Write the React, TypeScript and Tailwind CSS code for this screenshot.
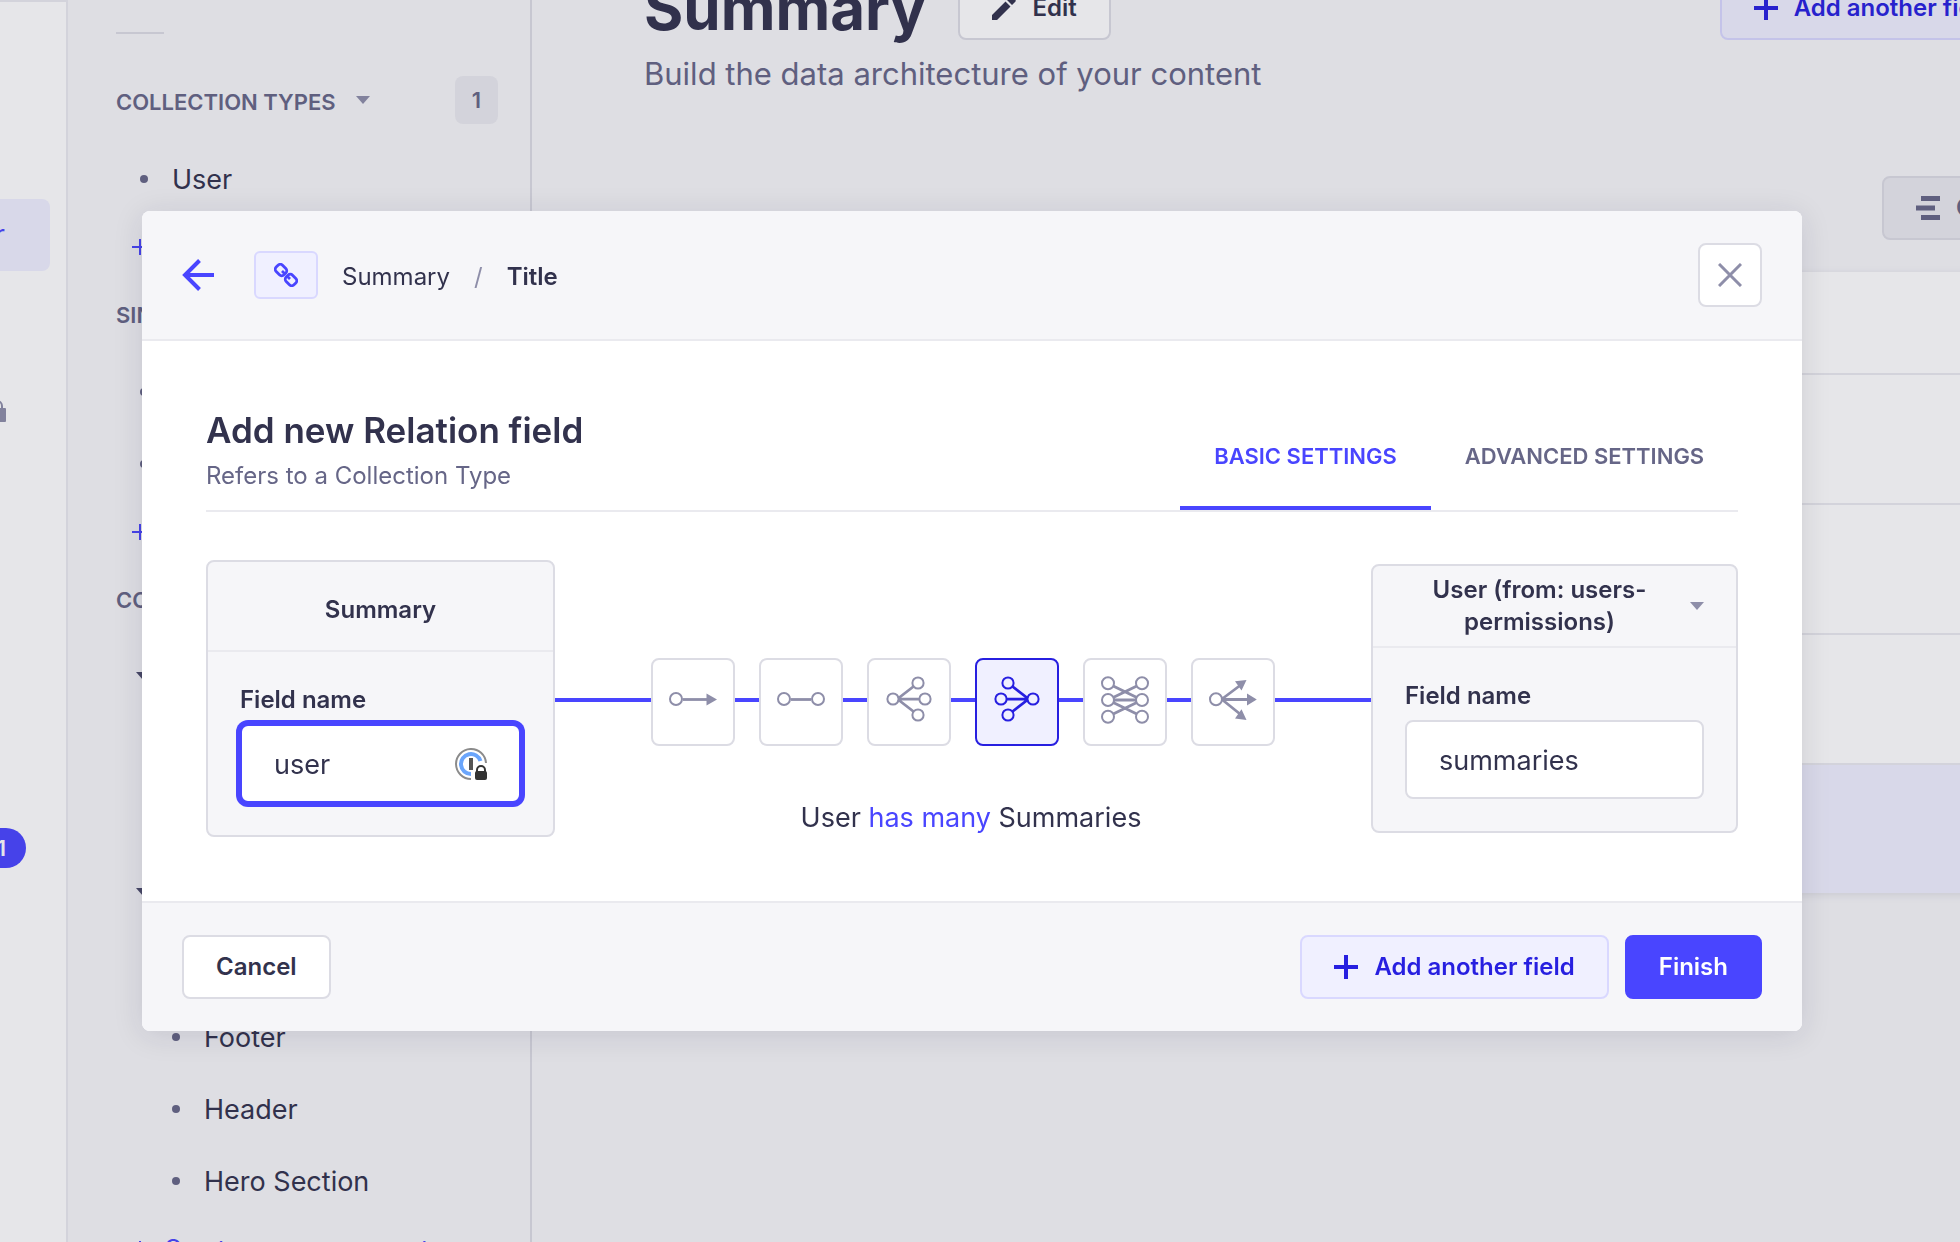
import { useId, useState } from "react";
import type { ReactNode } from "react";

function PlusIcon({ className }: { className: string }) {
  return (
    <svg viewBox="0 0 24 24" className={className} fill="none" stroke="currentColor" strokeWidth="4" aria-hidden="true">
      <path d="M12 0v24M0 12h24" />
    </svg>
  );
}

function Caret({ className }: { className: string }) {
  return (
    <svg viewBox="0 0 14 8" className={className} fill="currentColor" aria-hidden="true">
      <path d="M0 0h14L7 8z" />
    </svg>
  );
}

function PencilIcon() {
  return (
    <svg viewBox="0 0 24 24" className="size-6" fill="currentColor" aria-hidden="true">
      <path d="M0 24v-5L13.500 5.500l5 5L5 24zM15 4l3.300-3.300a1.500 1.500 0 0 1 2 0l3 3a1.500 1.500 0 0 1 0 2L20 9z" />
    </svg>
  );
}

function LinkIcon() {
  return (
    <svg viewBox="0 0 24 24" className="size-6" fill="none" stroke="currentColor" strokeWidth="2.800" aria-hidden="true">
      <rect x="1.500" y="2.500" width="11" height="9" rx="3.200" transform="rotate(45 7 7)" />
      <rect x="11.500" y="12.500" width="11" height="9" rx="3.200" transform="rotate(45 17 17)" />
      <path d="M8 8l3 3M13 13l3 3" />
    </svg>
  );
}

function OnePasswordIcon() {
  return (
    <svg viewBox="0 0 32 32" className="size-8" fill="none" aria-hidden="true">
      <path d="M16 31A15 15 0 1 1 31 15" stroke="#8b8b8b" strokeWidth="2" />
      <path d="M16 26A10 10 0 1 1 25.500 13" stroke="#6aa5fb" strokeWidth="4" />
      <path d="M14 10h4v12h-4z" fill="#555" />
      <path d="M22 24v-2a4 4 0 0 1 8 0v2" stroke="#333" strokeWidth="2" />
      <rect x="20" y="23" width="12" height="9" rx="2" fill="#333" />
    </svg>
  );
}

const dot = { fill: "none", strokeWidth: 2 };

const relations: { name: string; drawing: ReactNode }[] = [
  {
    name: "has one",
    drawing: (
      <>
        <circle cx="23" cy="39" r="6" {...dot} />
        <path d="M30 39.500h24" />
        <path d="M53.500 33.500l10.500 6-10.500 6z" fill="currentColor" stroke="none" />
      </>
    ),
  },
  {
    name: "has and belongs to one",
    drawing: (
      <>
        <circle cx="23" cy="39" r="6" {...dot} />
        <circle cx="57" cy="39" r="6" {...dot} />
        <path d="M30 39.500h20" />
      </>
    ),
  },
  {
    name: "belongs to many",
    drawing: (
      <>
        <circle cx="24" cy="39" r="5.600" {...dot} />
        <circle cx="49" cy="23" r="5.600" {...dot} />
        <circle cx="56" cy="39" r="5.600" {...dot} />
        <circle cx="49" cy="55" r="5.600" {...dot} />
        <path d="M44.500 26.500L29 38.500M30 39.200h20M29 39.500l15.500 12" />
      </>
    ),
  },
  {
    name: "has many",
    drawing: (
      <>
        <circle cx="31" cy="23" r="5.600" {...dot} />
        <circle cx="24" cy="39" r="5.600" {...dot} />
        <circle cx="31" cy="55" r="5.600" {...dot} />
        <circle cx="56" cy="39" r="5.600" {...dot} />
        <path d="M35.500 26.500L51 38.500M30 39.200h20M51 39.500l-15.500 12" />
      </>
    ),
  },
  {
    name: "has and belongs to many",
    drawing: (
      <>
        <path d="M23 23.500L57 40 23 56.500M57 23.500L23 40l34 16.500M23 40h34" />
        <g fill="#fff" strokeWidth="2">
          <circle cx="23" cy="23.300" r="6" />
          <circle cx="23" cy="40" r="6" />
          <circle cx="23" cy="56.700" r="6" />
          <circle cx="57" cy="23.300" r="6" />
          <circle cx="57" cy="40" r="6" />
          <circle cx="57" cy="56.700" r="6" />
        </g>
      </>
    ),
  },
  {
    name: "has many (one way)",
    drawing: (
      <>
        <circle cx="23" cy="39.300" r="6" {...dot} />
        <path d="M29 39l18-13.500M29 39.500h26M29 39.500L47 54" />
        <path
          d="M53.500 20L42 21.200l6.500 9.300zM54 33.500l9.800 6-9.800 6zM53.500 60L42 58.500l6.500-9.300z"
          fill="currentColor"
          stroke="none"
        />
      </>
    ),
  },
];

function SectionHeader({ title, count }: { title: string; count: number }) {
  return (
    <div className="flex h-12 items-center justify-between">
      <button type="button" className="flex items-center gap-5 pt-1 text-[22px] leading-7 font-semibold text-[#666687]">
        {title}
        <Caret className="mb-1 h-2 w-3.5 text-[#8e8ea9]" />
      </button>
      <span className="flex h-12 w-[43px] items-center justify-center rounded-lg bg-[#eaeaef] text-[22px] font-semibold text-[#666687]">
        {count}
      </span>
    </div>
  );
}

function NavItem({ label, nested }: { label: string; nested?: boolean }) {
  return (
    <li className={nested ? "pl-14" : "pl-6"}>
      <a href="#" className="flex h-[72px] items-center gap-6 text-[27px] text-[#32324d]">
        <span className="size-2 shrink-0 rounded-full bg-[#666687]" />
        <span className="pt-0.5">{label}</span>
      </a>
    </li>
  );
}

function NavGroup({ label, items }: { label: string; items: string[] }) {
  return (
    <li>
      <button type="button" className="flex h-[72px] w-full items-center gap-6 pl-5 text-[27px] text-[#32324d]">
        <Caret className="mb-0.5 h-2 w-3.5 text-[#4a4a6a]" />
        {label}
      </button>
      <ul>
        {items.map((item) => (
          <NavItem key={item} label={item} nested />
        ))}
      </ul>
    </li>
  );
}

function CreateLink({ label }: { label: string }) {
  return (
    <button type="button" className="flex h-16 items-center gap-4 pl-4 text-[24px] whitespace-nowrap text-[#4945ff]">
      <svg viewBox="0 0 16 16" className="size-4" fill="none" stroke="currentColor" strokeWidth="2" aria-hidden="true">
        <path d="M8 0v16M0 8h16" />
      </svg>
      {label}
    </button>
  );
}

function MainNav() {
  return (
    <nav aria-label="Main" className="flex w-[68px] shrink-0 flex-col items-end overflow-hidden border-t-2 border-r-2 border-[#eaeaef] bg-white text-[27px]">
      <a href="#" className="mt-[197px] mr-4 flex h-[72px] items-center rounded-lg bg-[#f0f0ff] pr-[45px] pl-6 whitespace-nowrap text-[#4945ff]">
        Content-Type Builder
      </a>
      <svg viewBox="0 0 18 22" className="mt-[129px] mr-[60px] h-[22px] w-[18px] shrink-0 text-[#8e8ea9]" aria-label="Locked">
        <path d="M4 9V6a5 5 0 0 1 10 0v3" fill="none" stroke="currentColor" strokeWidth="2" />
        <rect y="8" width="18" height="14" rx="1" fill="currentColor" />
      </svg>
      <span className="mt-[406px] mr-10 flex h-10 shrink-0 items-center rounded-full bg-[#4945ff] px-5 text-[22px] font-semibold text-white">1</span>
    </nav>
  );
}

function Sidebar() {
  return (
    <aside className="flex w-[464px] shrink-0 flex-col border-r-2 border-[#dcdce4] bg-[#f6f6f9] pr-8 pl-12">
      <hr className="mt-8 mb-[42px] w-12 border-t-2 border-[#dcdce4]" />
      <div className="flex flex-col gap-2.5">
        <section>
          <SectionHeader title="COLLECTION TYPES" count={1} />
          <ul className="pt-[19px]">
            <NavItem label="User" />
          </ul>
          <CreateLink label="Create new collection type" />
        </section>
        <section>
          <SectionHeader title="SINGLE TYPES" count={2} />
          <ul className="pt-[19px]">
            <NavItem label="Home" />
            <NavItem label="Summary" />
          </ul>
          <CreateLink label="Create new single type" />
        </section>
        <section>
          <SectionHeader title="COMPONENTS" count={5} />
          <ul className="pt-[19px]">
            <NavGroup label="Elements" items={["Button", "Link"]} />
            <NavGroup label="Layout" items={["Card", "Footer", "Header", "Hero Section"]} />
          </ul>
          <CreateLink label="Create new component" />
        </section>
      </div>
    </aside>
  );
}

function Page() {
  return (
    <main className="min-w-0 flex-1 overflow-hidden bg-[#f6f6f9] pl-28">
      <div className="-mt-6 -mr-[245px]">
        <header className="flex h-16 items-center justify-between pr-[177px]">
          <div className="flex items-center gap-8">
            <h1 className="text-[60px] leading-[80px] font-bold text-[#32324d]">Summary</h1>
            <button type="button" className="flex h-16 items-center gap-4 rounded-lg border-2 border-[#dcdce4] bg-white px-8 text-[24px] font-semibold text-[#32324d]">
              <PencilIcon />
              Edit
            </button>
          </div>
          <button type="button" className="flex h-16 items-center gap-4 rounded-lg border-2 border-[#d9d8ff] bg-[#f0f0ff] px-8 text-[24px] font-semibold whitespace-nowrap text-[#271fe0]">
            <PlusIcon className="size-6" />
            Add another field
          </button>
        </header>
        <p className="mt-3 mb-20 text-[31px] leading-[44px] text-[#666687]">Build the data architecture of your content</p>
        <div className="flex justify-end">
          <button type="button" className="flex h-16 w-[323px] items-center gap-4 rounded-lg border-2 border-[#dcdce4] bg-[#eaeaef] px-8 text-[24px] font-semibold whitespace-nowrap text-[#666687]">
            <svg viewBox="0 0 24 24" className="size-6 shrink-0" fill="currentColor" aria-hidden="true">
              <path d="M5 0h19v5H5zM0 9.500h19v5H0zM5 19h19v5H5z" />
            </svg>
            Configure the view
          </button>
        </div>
        <div className="mt-8 rounded-lg bg-white shadow-[0_2px_8px_rgba(33,33,52,0.1)]">
          <div className="h-[103px] border-b-2 border-[#eaeaef]" />
          <div className="h-[130px] border-b-2 border-[#eaeaef]" />
          <div className="h-[130px] border-b-2 border-[#eaeaef]" />
          <div className="h-[130px] border-b-2 border-[#eaeaef]" />
          <div className="h-[128px] bg-[#f0f0ff]" />
        </div>
      </div>
    </main>
  );
}

function RelationField({ label, defaultValue, focused }: { label: string; defaultValue: string; focused?: boolean }) {
  const id = useId();
  return (
    <div className="flex flex-col gap-2 p-8">
      <label htmlFor={id} className="text-[24px] leading-8 font-semibold">
        {label}
      </label>
      <div
        className={
          focused
            ? "flex h-[79px] items-center rounded-lg border-2 border-[#4945ff] bg-white px-8 ring-4 ring-[#4945ff]"
            : "flex h-[79px] items-center rounded-lg border-2 border-[#dcdce4] bg-white px-8"
        }
      >
        <input id={id} type="text" defaultValue={defaultValue} className="w-full min-w-0 flex-1 bg-transparent pt-1 text-[27px] outline-none" />
        {focused && <OnePasswordIcon />}
      </div>
    </div>
  );
}

function RelationPicker() {
  const [selected, setSelected] = useState("has many");
  return (
    <div className="flex flex-1 flex-col self-start pt-[98px]">
      <div className="relative flex justify-center gap-6">
        <div className="absolute inset-x-0 top-10 h-1 bg-[#4945ff]" />
        {relations.map(({ name, drawing }) => (
          <button
            key={name}
            type="button"
            aria-label={name}
            aria-pressed={selected === name}
            onClick={() => setSelected(name)}
            className={
              selected === name
                ? "relative h-[88px] w-[84px] rounded-lg border-2 border-[#271fe0] bg-[#f0f0ff] text-[#271fe0]"
                : "relative h-[88px] w-[84px] rounded-lg border-2 border-[#dcdce4] bg-white text-[#8e8ea9]"
            }
          >
            <svg viewBox="0 0 80 84" className="h-[84px] w-20" fill="none" stroke="currentColor" strokeWidth="2.800" aria-hidden="true">
              {drawing}
            </svg>
          </button>
        ))}
      </div>
      <p className="pt-[54px] pl-4 text-center text-[27px] leading-9">
        User <span className="text-[#4945ff]">has many</span> Summaries
      </p>
    </div>
  );
}

function RelationDialog() {
  return (
    <div role="dialog" aria-modal="true" aria-labelledby="dialog-title" className="w-full max-w-[1660px] overflow-hidden rounded-lg bg-white text-[#32324d] shadow-[0_4px_30px_rgba(33,33,52,0.12)]">
      <header className="flex h-[130px] items-center justify-between border-b-2 border-[#eaeaef] bg-[#f6f6f9] px-10">
        <div className="flex items-center">
          <button type="button" aria-label="Back" className="mr-10 text-[#4945ff]">
            <svg viewBox="0 0 32 32" className="size-8" fill="none" stroke="currentColor" strokeWidth="4" aria-hidden="true">
              <path d="M17.500 1.500L3 16l14.500 14.500M3 16h29" />
            </svg>
          </button>
          <span className="mr-6 flex h-12 w-16 items-center justify-center rounded-md border-2 border-[#d9d8ff] bg-[#f0f0ff] text-[#4945ff]">
            <LinkIcon />
          </span>
          <nav aria-label="Breadcrumb" className="flex gap-6 pt-1 text-[24px] leading-8">
            <span>Summary</span>
            <span className="text-[#8e8ea9]">/</span>
            <span className="font-semibold">Title</span>
          </nav>
        </div>
        <button type="button" aria-label="Close" className="flex size-16 items-center justify-center rounded-lg border-2 border-[#dcdce4] bg-white text-[#8e8ea9]">
          <svg viewBox="0 0 24 24" className="size-6" fill="none" stroke="currentColor" strokeWidth="3" aria-hidden="true">
            <path d="M1 1l22 22M23 1L1 23" />
          </svg>
        </button>
      </header>

      <div className="px-16 pt-[63px] pb-16">
        <div className="flex items-end justify-between border-b-2 border-[#eaeaef]">
          <div className="pb-3.5">
            <h2 id="dialog-title" className="text-[35px] leading-[52px] font-semibold">
              Add new Relation field
            </h2>
            <p className="text-[24px] leading-10 text-[#666687]">Refers to a Collection Type</p>
          </div>
          <div role="tablist" className="flex text-[22px] leading-7 font-semibold">
            <button type="button" role="tab" aria-selected="true" className="min-w-[251px] border-b-4 border-[#4945ff] px-8 pt-8 pb-9 text-[#4945ff]">
              BASIC SETTINGS
            </button>
            <button type="button" role="tab" aria-selected="false" className="min-w-[307px] border-b-4 border-transparent px-8 pt-8 pb-9 text-[#666687]">
              ADVANCED SETTINGS
            </button>
          </div>
        </div>

        <div className="flex items-center pt-12">
          <section className="w-[349px] rounded-lg border-2 border-[#dcdce4] bg-[#f6f6f9]">
            <h3 className="flex h-[90px] items-center justify-center border-b-2 border-[#eaeaef] pt-2 text-[24px] font-semibold">Summary</h3>
            <RelationField label="Field name" defaultValue="user" focused />
          </section>
          <RelationPicker />
          <section className="w-[367px] rounded-lg border-2 border-[#dcdce4] bg-[#f6f6f9]">
            <button type="button" aria-haspopup="listbox" className="flex h-[82px] w-full items-center border-b-2 border-[#eaeaef] pr-8 pl-4 text-[24px] leading-8 font-semibold">
              <span className="flex-1">User (from: users-permissions)</span>
              <Caret className="h-2 w-3.5 text-[#8e8ea9]" />
            </button>
            <RelationField label="Field name" defaultValue="summaries" />
          </section>
        </div>
      </div>

      <footer className="flex h-[130px] items-center justify-between border-t-2 border-[#eaeaef] bg-[#f6f6f9] px-10 text-[24px] font-semibold">
        <button type="button" className="h-16 rounded-lg border-2 border-[#dcdce4] bg-white px-8">
          Cancel
        </button>
        <div className="flex gap-4">
          <button type="button" className="flex h-16 items-center gap-4 rounded-lg border-2 border-[#d9d8ff] bg-[#f0f0ff] px-8 text-[#271fe0]">
            <PlusIcon className="size-6" />
            Add another field
          </button>
          <button type="button" className="h-16 rounded-lg border-2 border-[#4945ff] bg-[#4945ff] px-8 text-white">
            Finish
          </button>
        </div>
      </footer>
    </div>
  );
}

export default function App() {
  return (
    <div className="h-screen overflow-hidden font-['Inter',sans-serif]">
      <div className="flex h-full">
        <MainNav />
        <Sidebar />
        <Page />
      </div>
      <div className="fixed inset-0 flex items-center justify-center bg-[#32324d]/12 pr-4">
        <RelationDialog />
      </div>
    </div>
  );
}
